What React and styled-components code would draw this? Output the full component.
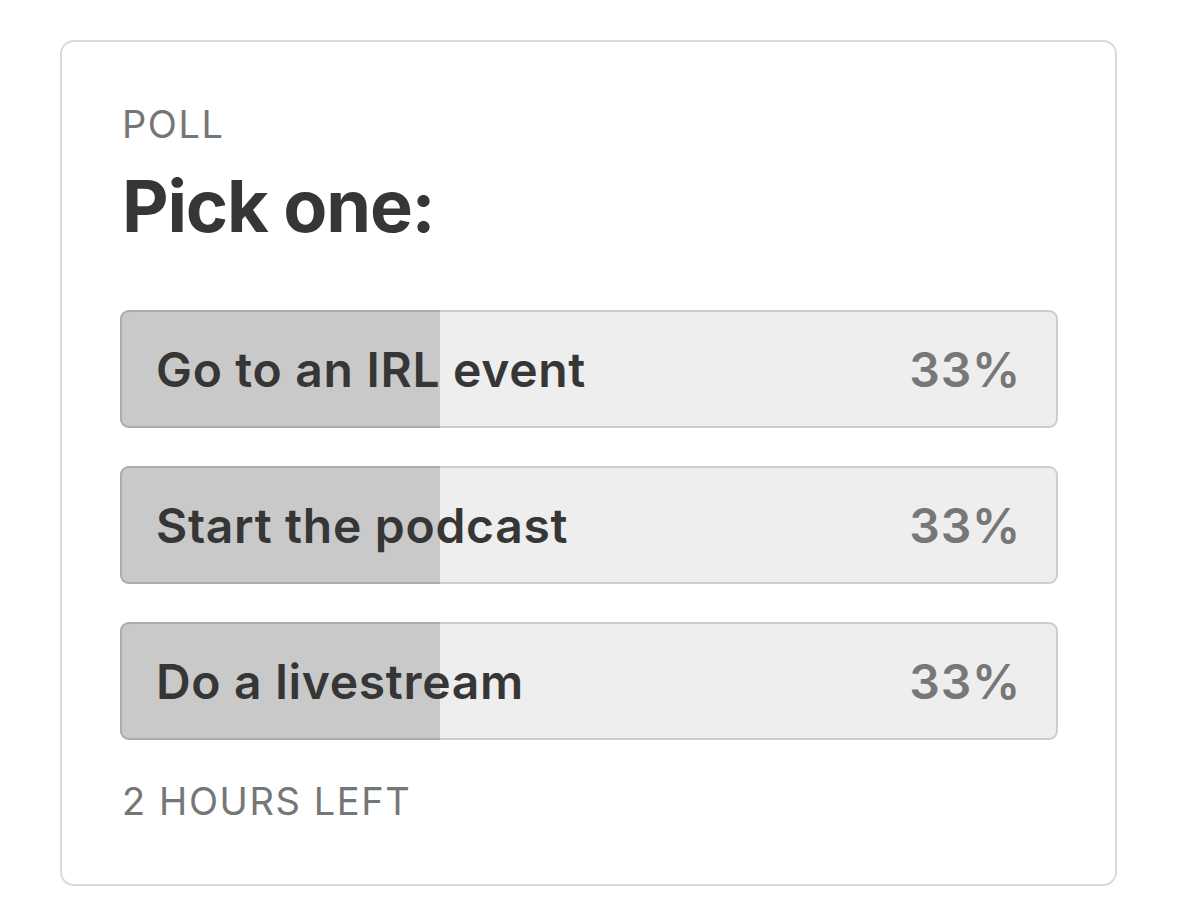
import React from "react";
import styled, { createGlobalStyle } from "styled-components";

const Global = createGlobalStyle`
  html, body { margin: 0; padding: 0; background: #ffffff; }
  body { font-family: Inter, "Noto Sans", "Liberation Sans", sans-serif; -webkit-font-smoothing: antialiased; }
`;

const Page = styled.div`
  padding: 40px 0 0 60px;
`;

const Card = styled.section`
  box-sizing: border-box;
  width: 1057px;
  height: 846px;
  border: 2px solid #dadada;
  border-radius: 14px;
  padding: 60px 57px 0 58px;
  display: flex;
  flex-direction: column;
`;

const Label = styled.div`
  font-size: 38px;
  line-height: 44px;
  font-weight: 400;
  color: #767676;
  letter-spacing: 1.6px;
  padding-left: 2px;
`;

const Title = styled.h2`
  margin: 16px 0 0;
  padding-left: 2px;
  font-size: 72px;
  line-height: 88px;
  font-weight: 700;
  color: #363636;
  letter-spacing: -1.2px;
`;

const Options = styled.div`
  margin-top: 60px;
  display: flex;
  flex-direction: column;
  gap: 38px;
`;

const Bar = styled.div`
  position: relative;
  box-sizing: border-box;
  height: 118px;
  border: 2px solid #cdcdcd;
  border-radius: 9px;
  background: #eeeeee;
  display: flex;
  align-items: center;
  justify-content: space-between;
  padding: 0 35px 0 34px;
`;

const Fill = styled.div`
  position: absolute;
  top: -2px;
  bottom: -2px;
  left: -2px;
  box-sizing: border-box;
  border: 2px solid #acacac;
  border-right: none;
  border-radius: 9px 0 0 9px;
  background: #c9c9c9;
`;

const OptionText = styled.span`
  position: relative;
  font-size: 48px;
  font-weight: 600;
  color: #363636;
  letter-spacing: 0.7px;
`;

const Percent = styled.span`
  position: relative;
  font-size: 48px;
  font-weight: 600;
  color: #777777;
  letter-spacing: 0.8px;
`;

const Footer = styled.div`
  margin-top: 39px;
  font-size: 38px;
  line-height: 44px;
  color: #767676;
  padding-left: 2px;
  letter-spacing: 1.6px;
`;

const options = [
  { label: "Go to an IRL event", pct: 33 },
  { label: "Start the podcast", pct: 33 },
  { label: "Do a livestream", pct: 33 },
];

export default function App() {
  return (
    <>
      <Global />
      <Page>
        <Card>
          <Label>POLL</Label>
          <Title>Pick one:</Title>
          <Options>
            {options.map((o) => (
              <Bar key={o.label}>
                <Fill style={{ width: `calc(${o.pct}% + 12px)` }} />
                <OptionText>{o.label}</OptionText>
                <Percent>{o.pct}%</Percent>
              </Bar>
            ))}
          </Options>
          <Footer>2 HOURS LEFT</Footer>
        </Card>
      </Page>
    </>
  );
}
